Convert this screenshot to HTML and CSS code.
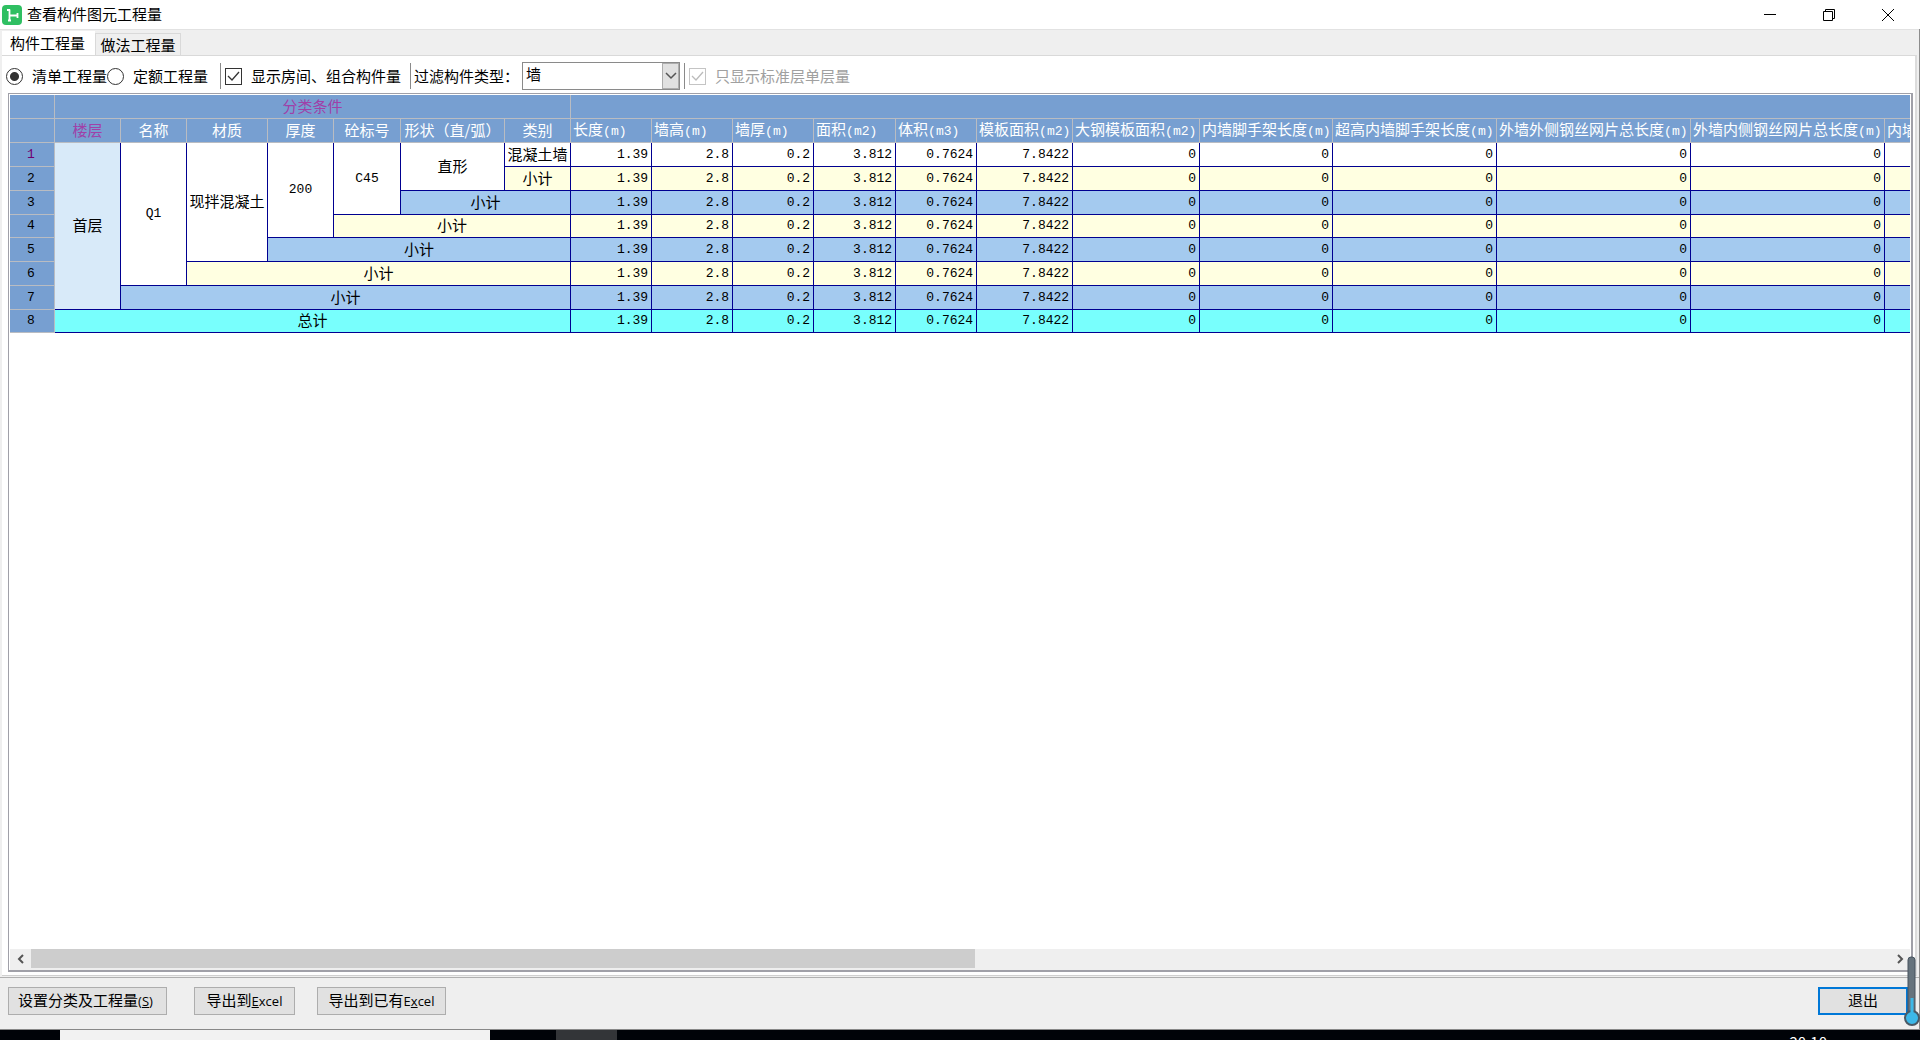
FILE: index.html
```html
<!DOCTYPE html>
<html lang="zh-CN">
<head>
<meta charset="utf-8">
<title>查看构件图元工程量</title>
<link rel="stylesheet" href="styles.css">
</head>
<body>
<div class="window">
  <header class="titlebar">
    <svg class="logo" viewBox="0 0 20 20" aria-hidden="true"><rect width="20" height="20" rx="4" fill="#2fbf62"/><path d="M5 5h3M7.500 4.500v11M6 15.500h3M7.500 10.500h7.500M15.500 8v5" fill="none" stroke="#fff" stroke-width="1.800"/></svg>
    <h1 class="title">查看构件图元工程量</h1>
    <div class="window-buttons">
      <button class="win-btn" aria-label="最小化"><svg viewBox="0 0 14 14"><path d="M1 6.500h12"/></svg></button>
      <button class="win-btn" aria-label="还原"><svg viewBox="0 0 14 14"><path d="M1.500 3.500h9v9h-9zM3.500 3.500v-2h9v9h-2"/></svg></button>
      <button class="win-btn" aria-label="关闭"><svg viewBox="0 0 14 14"><path d="M1 1l12 12M13 1L1 13"/></svg></button>
    </div>
  </header>
  <div class="client">
    <nav class="tabs">
      <button class="tab tab-active">构件工程量</button>
      <button class="tab">做法工程量</button>
    </nav>
    <main class="panel">
      <div class="toolbar">
        <label class="option"><input type="radio" name="kind" checked>清单工程量</label>
        <label class="option"><input type="radio" name="kind">定额工程量</label>
        <span class="divider divider-wide"></span>
        <label class="option"><input type="checkbox" checked>显示房间、组合构件量</label>
        <span class="divider divider-filter"></span>
        <label class="filter-label" for="filter">过滤构件类型：</label>
        <div class="select-box">
          <select id="filter"><option>墙</option></select>
          <span class="select-arrow"><svg viewBox="0 0 12 8"><path d="M1 1l5 5 5-5"/></svg></span>
        </div>
        <span class="divider"></span>
        <label class="option option-disabled"><input type="checkbox" checked disabled>只显示标准层单层量</label>
      </div>
      <div class="grid">
        <div class="grid-view">
          <table class="data">
            <colgroup>
              <col class="w45"><col class="w66"><col class="w66"><col class="w81"><col class="w66"><col class="w67"><col class="w104"><col class="w66">
              <col class="w81"><col class="w81"><col class="w81"><col class="w82"><col class="w81"><col class="w96"><col class="w127"><col class="w133"><col class="w164"><col class="w194"><col class="w194"><col>
            </colgroup>
            <thead>
              <tr><th></th><th colspan="7" class="accent">分类条件</th><th colspan="12"></th></tr>
              <tr><th></th><th class="accent">楼层</th><th>名称</th><th>材质</th><th>厚度</th><th>砼标号</th><th>形状（直/弧）</th><th>类别</th>
                <th class="q">长度<i>(m)</i></th><th class="q">墙高<i>(m)</i></th><th class="q">墙厚<i>(m)</i></th><th class="q">面积<i>(m2)</i></th><th class="q">体积<i>(m3)</i></th><th class="q">模板面积<i>(m2)</i></th><th class="q">大钢模板面积<i>(m2)</i></th><th class="q">内墙脚手架长度<i>(m)</i></th><th class="q">超高内墙脚手架长度<i>(m)</i></th><th class="q">外墙外侧钢丝网片总长度<i>(m)</i></th><th class="q">外墙内侧钢丝网片总长度<i>(m)</i></th><th class="q">内墙</th></tr>
            </thead>
            <tbody>
              <tr><th class="current">1</th><td rowspan="7" class="selected">首层</td><td rowspan="6" class="code">Q1</td><td rowspan="5">现拌混凝土</td><td rowspan="4" class="code">200</td><td rowspan="3" class="code">C45</td><td rowspan="2">直形</td><td>混凝土墙</td><td class="n">1.39</td><td class="n">2.8</td><td class="n">0.2</td><td class="n">3.812</td><td class="n">0.7624</td><td class="n">7.8422</td><td class="n">0</td><td class="n">0</td><td class="n">0</td><td class="n">0</td><td class="n">0</td><td class="n"></td></tr>
              <tr class="cream"><th>2</th><td class="sum">小计</td><td class="n">1.39</td><td class="n">2.8</td><td class="n">0.2</td><td class="n">3.812</td><td class="n">0.7624</td><td class="n">7.8422</td><td class="n">0</td><td class="n">0</td><td class="n">0</td><td class="n">0</td><td class="n">0</td><td class="n"></td></tr>
              <tr class="blue"><th>3</th><td colspan="2" class="sum">小计</td><td class="n">1.39</td><td class="n">2.8</td><td class="n">0.2</td><td class="n">3.812</td><td class="n">0.7624</td><td class="n">7.8422</td><td class="n">0</td><td class="n">0</td><td class="n">0</td><td class="n">0</td><td class="n">0</td><td class="n"></td></tr>
              <tr class="cream"><th>4</th><td colspan="3" class="sum">小计</td><td class="n">1.39</td><td class="n">2.8</td><td class="n">0.2</td><td class="n">3.812</td><td class="n">0.7624</td><td class="n">7.8422</td><td class="n">0</td><td class="n">0</td><td class="n">0</td><td class="n">0</td><td class="n">0</td><td class="n"></td></tr>
              <tr class="blue"><th>5</th><td colspan="4" class="sum">小计</td><td class="n">1.39</td><td class="n">2.8</td><td class="n">0.2</td><td class="n">3.812</td><td class="n">0.7624</td><td class="n">7.8422</td><td class="n">0</td><td class="n">0</td><td class="n">0</td><td class="n">0</td><td class="n">0</td><td class="n"></td></tr>
              <tr class="cream"><th>6</th><td colspan="5" class="sum">小计</td><td class="n">1.39</td><td class="n">2.8</td><td class="n">0.2</td><td class="n">3.812</td><td class="n">0.7624</td><td class="n">7.8422</td><td class="n">0</td><td class="n">0</td><td class="n">0</td><td class="n">0</td><td class="n">0</td><td class="n"></td></tr>
              <tr class="blue"><th>7</th><td colspan="6" class="sum">小计</td><td class="n">1.39</td><td class="n">2.8</td><td class="n">0.2</td><td class="n">3.812</td><td class="n">0.7624</td><td class="n">7.8422</td><td class="n">0</td><td class="n">0</td><td class="n">0</td><td class="n">0</td><td class="n">0</td><td class="n"></td></tr>
              <tr class="total"><th>8</th><td colspan="7" class="sum">总计</td><td class="n">1.39</td><td class="n">2.8</td><td class="n">0.2</td><td class="n">3.812</td><td class="n">0.7624</td><td class="n">7.8422</td><td class="n">0</td><td class="n">0</td><td class="n">0</td><td class="n">0</td><td class="n">0</td><td class="n"></td></tr>
            </tbody>
          </table>
        </div>
        <div class="scrollbar">
          <button class="scroll-btn" aria-label="向左滚动"><svg viewBox="0 0 8 10"><path d="M6 1L2 5l4 4"/></svg></button>
          <div class="track"><div class="thumb"></div></div>
          <button class="scroll-btn" aria-label="向右滚动"><svg viewBox="0 0 8 10"><path d="M2 1l4 4-4 4"/></svg></button>
        </div>
      </div>
    </main>
    <footer class="actions">
      <button class="btn btn-settings">设置分类及工程量<span>(<u>S</u>)</span></button>
      <button class="btn btn-export">导出到<span><u>E</u>xcel</span></button>
      <button class="btn btn-append">导出到已有<span>E<u>x</u>cel</span></button>
      <button class="btn btn-exit">退出</button>
    </footer>
  </div>
  <div class="taskbar"><div class="task-search"></div><div class="task-app"></div><span class="clock">20:10</span></div>
  <svg class="gauge" viewBox="0 0 16 72" aria-hidden="true"><rect x="4" y="1" width="7" height="60" rx="3" fill="#66737d" stroke="#46535e"/><circle cx="8" cy="62" r="7" fill="#3db8e8" stroke="#4a5a66" stroke-width="2"/><path d="M8 42v18" stroke="#3db8e8" stroke-width="3"/></svg>
</div>
</body>
</html>
```
FILE: styles.css
```css
* { box-sizing: border-box; }
body {
  margin: 0;
  font: 15px/20px "Noto Sans CJK SC", sans-serif;
  color: #000;
  background: #efefef;
}
button, select, input { font: inherit; color: inherit; margin: 0; padding: 0; }
.window { position: relative; display: flex; flex-direction: column; height: 100vh; overflow: hidden; }

.titlebar { display: flex; align-items: center; height: 29px; padding: 0 3px 0 2px; background: #fff; flex: none; }
.logo { width: 20px; height: 20px; margin-right: 5px; }
.title { flex: 1; margin: 0; padding-bottom: 2px; font-size: 15px; font-weight: 400; }
.window-buttons { display: flex; }
.win-btn { width: 59px; height: 29px; border: 0; background: none; display: flex; align-items: center; justify-content: center; }
.win-btn svg { width: 14px; height: 14px; fill: none; stroke: #000; }

.client { flex: 1; min-height: 0; display: flex; flex-direction: column; border-right: 1px solid #8c8c8c; }
.tabs { display: flex; align-items: flex-end; height: 26px; padding-left: 2px; border-top: 1px solid #e2e2e2; flex: none; }
.tab { width: 86px; height: 22px; border: 1px solid #d9d9d9; border-bottom: 0; background: #efefef; line-height: 20px; }
.tab-active { width: 93px; height: 24px; border: 0; background: #fff; padding-right: 2px; }

.panel { flex: 1; min-height: 0; display: flex; flex-direction: column; margin: 0 2px 0 2px; padding: 0 2px 3px 6px; background: #fff; border-top: 1px solid #d9d9d9; border-right: 2px solid #dcdcdc; border-bottom: 1px solid #d0d0d0; }
.toolbar { display: flex; align-items: center; height: 37px; flex: none; padding-top: 3px; margin-left: -2px; }
.option { display: flex; align-items: center; white-space: nowrap; }
.option input { appearance: none; flex: none; width: 17px; height: 17px; margin-right: 9px; border: 1px solid #333; background: #fff; }
.option input[type="radio"] { border-radius: 50%; }
.option input[type="radio"]:checked { background: radial-gradient(circle, #333 4px, #fff 5px); }
.option input[type="checkbox"]:checked { background: url("data:image/svg+xml,%3Csvg xmlns='http://www.w3.org/2000/svg' viewBox='0 0 15 15'%3E%3Cpath d='M2 7l4 4 7-8' fill='none' stroke='%23333' stroke-width='1.300'/%3E%3C/svg%3E"); }
.option input:disabled { border-color: #c4c4c4; opacity: 1; }
.option input[type="checkbox"]:disabled { background: url("data:image/svg+xml,%3Csvg xmlns='http://www.w3.org/2000/svg' viewBox='0 0 15 15'%3E%3Cpath d='M2 7l4 4 7-8' fill='none' stroke='%23bbb' stroke-width='1.300'/%3E%3C/svg%3E"); }
.option-disabled { color: #a0a0a0; }
.divider { width: 1px; height: 26px; margin: 0 4px; background: #8a8a8a; }
.divider-wide { margin-left: 12px; }
.divider-filter { margin: 0 3px 0 9px; }
.filter-label { width: 108px; white-space: nowrap; }
.select-box { display: flex; width: 158px; height: 28px; border: 1px solid #8a8a8a; background: #fff; }
.select-box select { appearance: none; flex: 1; border: 0; padding: 0 3px 4px; background: #fff; }
.select-arrow { display: flex; align-items: center; justify-content: center; width: 17px; background: #e1e1e1; border: 1px solid #adadad; }
.select-arrow svg { width: 12px; height: 8px; fill: none; stroke: #555; stroke-width: 1.500; flex: none; }

.grid { flex: 1; min-height: 0; display: flex; flex-direction: column; border: 1px solid #a0a0a8; border-right-width: 2px; border-bottom-width: 2px; padding: 1px 1px 0; }
.grid-view { flex: 1; min-height: 0; overflow: hidden; }
.data { table-layout: fixed; width: 100%; border-collapse: separate; border-spacing: 0; }
.w45 { width: 45px; }
.w66 { width: 66px; }
.w67 { width: 67px; }
.w81 { width: 81px; }
.w82 { width: 82px; }
.w96 { width: 96px; }
.w104 { width: 104px; }
.w127 { width: 127px; }
.w133 { width: 133px; }
.w164 { width: 164px; }
.w194 { width: 194px; }
.data tr { height: 24px; }
.data tbody tr:nth-child(4n) { height: 23px; }
.data th, .data td { padding: 0 0 2px; overflow: hidden; white-space: nowrap; line-height: 18px; text-align: center; font-weight: 400; }
.data th { background: #779fd1; color: #fff; border-right: 1px solid #b9bcc2; border-bottom: 1px solid #b9bcc2; }
.data td { border-right: 1px solid #000090; border-bottom: 1px solid #000090; background: #fff; }
.data tr > :last-child { border-right: 0; }
.data .accent { color: #a040a8; }
.data .q { text-align: left; padding-left: 2px; }
.data i, .data .n, .data .code, .data tbody th { font-family: "Liberation Mono", monospace; font-size: 13px; font-style: normal; }
.data i { line-height: 16px; }
.data .n { text-align: right; padding: 0 3px 0 0; }
.data .code { padding: 0; }
.data tbody th { color: #000; padding: 0 2px 0 0; }
.data tbody .current { color: #700070; }
.data .selected { background: #d8eaf9; }
.cream .n, .cream .sum { background: #ffffe1; }
.blue .n, .blue .sum { background: #a4caef; }
.total .n, .total .sum { background: #78fffd; }

.scrollbar { display: flex; height: 21px; flex: none; background: #efefef; }
.scroll-btn { width: 21px; border: 0; background: none; display: flex; align-items: center; justify-content: center; padding-bottom: 2px; }
.scroll-btn svg { width: 8px; height: 10px; fill: none; stroke: #555; stroke-width: 2; }
.track { flex: 1; }
.thumb { width: 50.8%; height: 19px; background: #cdcdcd; }

.actions { display: flex; align-items: flex-start; flex: none; height: 53px; margin-top: 1px; padding: 9px 11px 0 8px; border-top: 1px solid #b0b0b0; border-bottom: 1px solid #888; }
.btn { height: 28px; border: 1px solid #adadad; background: #e1e1e1; white-space: nowrap; line-height: 22px; padding-bottom: 2px; }
.btn span { font-family: "Open Sans", sans-serif; font-size: 13px; }
.btn-settings { width: 159px; padding-right: 4px; }
.btn-export { width: 101px; margin-left: 27px; }
.btn-append { width: 129px; margin-left: 22px; }
.btn-exit { width: 90px; margin-left: auto; border: 2px solid #0078d7; }

.taskbar { display: flex; height: 10px; flex: none; overflow: hidden; background: #000308; color: #fff; }
.task-search { width: 430px; margin-left: 60px; background: #f2f2f2; }
.task-app { width: 61px; margin-left: 66px; background: #333538; }
.clock { margin: 3px 93px 0 auto; line-height: 18px; font-size: 15px; }
.gauge { position: absolute; right: 0; bottom: 12px; width: 16px; height: 72px; }
```
